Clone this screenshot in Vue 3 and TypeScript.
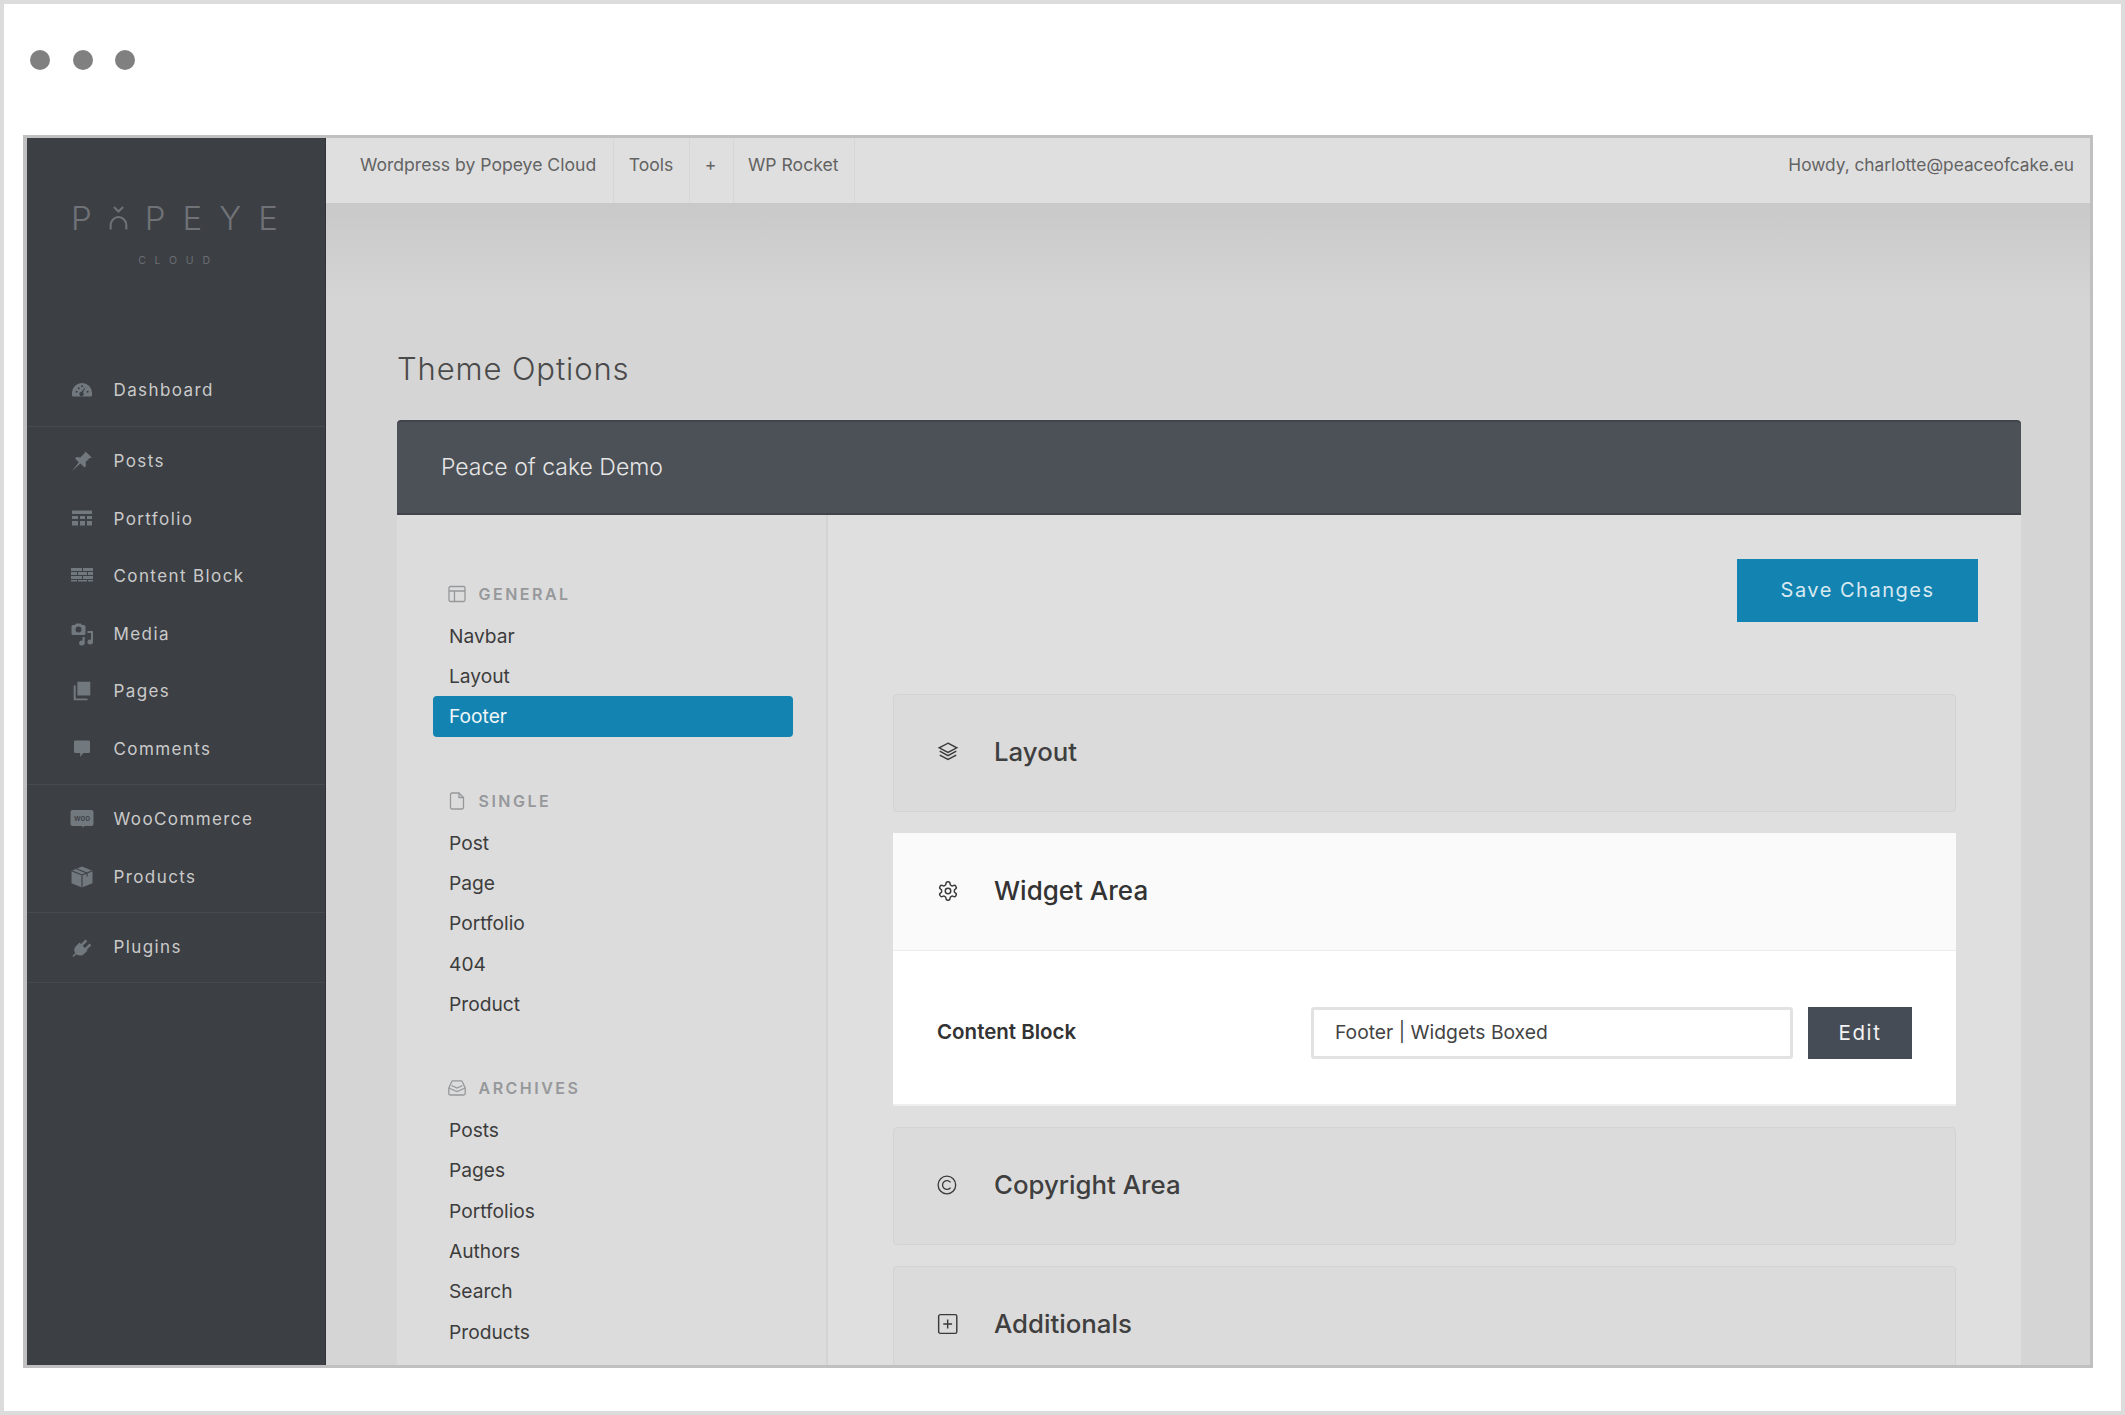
<script setup lang="ts">
interface NavIcon {
  d: string;
  cut?: string;
  woo?: boolean;
  box?: string;
}

interface NavItem {
  label: string;
  icon: NavIcon;
}

const icons: Record<string, NavIcon> = {
  gauge: {
    d: 'M12 4.500a11 11 0 0 0-11 11c0 1.400.2 2.500.6 3.500h20.800c.4-1 .6-2.100.6-3.500a11 11 0 0 0-11-11zM5 14a1.100 1.100 0 1 0 2.200 0a1.100 1.100 0 1 0-2.200 0zM7.400 10a1.100 1.100 0 1 0 2.200 0a1.100 1.100 0 1 0-2.200 0zM11 8a1.100 1.100 0 1 0 2.200 0a1.100 1.100 0 1 0-2.200 0zM17 14a1.100 1.100 0 1 0 2.200 0a1.100 1.100 0 1 0-2.200 0zM16 8.500l-3 6.300a2.200 2.200 0 1 1-1.800-.6z',
    box: '-1 -1 26 26',
  },
  pin: {
    d: 'M15.500 2.500l6.500 6.200-2.300.4-4 4 .2 3.800-1.400 1.500-4-4L2 22l6.800-8.700-3.700-3.800 1.500-1.400 3.700.3 4-4z',
  },
  table: {
    d: 'M2 3.500h20v3.500H2zM2 9h6v3H2zM10 9h5v3h-5zM17 9h5v3h-5zM2 14h6v4.500H2zM10 14h5v4.500h-5zM17 14h5v4.500h-5z',
  },
  bricks: {
    d: 'M1 4h11v3H1zM13 4h10v3H13zM1 8h6v3H1zM8 8h9v3H8zM18 8h5v3h-5zM1 12h11v3H1zM13 12h10v3H13zM1 16h6v1.500H1zM8 16h9v1.500H8zM18 16h5v1.500h-5z',
  },
  media: {
    d: 'M3 3h2l1-1.500h5L12 3h2a1.500 1.500 0 0 1 1.500 1.500v7A1.500 1.500 0 0 1 14 13H3a1.500 1.500 0 0 1-1.500-1.500v-7A1.500 1.500 0 0 1 3 3zM5.500 7.500a3 3 0 1 0 6 0a3 3 0 1 0-6 0zM17.500 9H23v11a2.800 2.400 0 1 1-2-2.300V11h-3.500zM12.500 15h2.200v6a2.800 2.400 0 1 1-2.200-2.300z',
  },
  pages: {
    d: 'M7 2h14v15H7zM3 6h2.200v14H18v2H3z',
    box: '-1 -1 26 26',
  },
  comment: {
    d: 'M4.500 3h15A1.500 1.500 0 0 1 21 4.500v11a1.500 1.500 0 0 1-1.500 1.500h-6L10 21.500V17H4.500A1.500 1.500 0 0 1 3 15.500v-11A1.500 1.500 0 0 1 4.500 3z',
    box: '-1.500 -1 27 27',
  },
  woo: {
    d: 'M2.500 3h19A2 2 0 0 1 23.500 5v12a2 2 0 0 1-2 2H14l-1 1.800L12 19H2.500a2 2 0 0 1-2-2V5a2 2 0 0 1 2-2z',
    woo: true,
  },
  box: {
    d: 'M12 1.500l10.500 4.200v12.500L12 22.500 1.500 18.200V5.700z',
    cut: 'M1.500 5.700L12 10l10.500-4.300M12 10v12.500M6.500 3.700l10.500 4.300v3.500',
  },
  plug: {
    d: 'M9.500 7.500l8 8L14 19a5.500 5.500 0 0 1-7.500.2L3.500 22l-1-1 2.800-3a5.500 5.500 0 0 1 .7-7zM11 9l4.500-4.500 1.800 1.800-4.500 4.500zM15 13l4.500-4.500 1.800 1.800-4.500 4.500z',
  },
};

const navGroups: NavItem[][] = [
  [{ label: 'Dashboard', icon: icons.gauge }],
  [
    { label: 'Posts', icon: icons.pin },
    { label: 'Portfolio', icon: icons.table },
    { label: 'Content Block', icon: icons.bricks },
    { label: 'Media', icon: icons.media },
    { label: 'Pages', icon: icons.pages },
    { label: 'Comments', icon: icons.comment },
  ],
  [
    { label: 'WooCommerce', icon: icons.woo },
    { label: 'Products', icon: icons.box },
  ],
  [{ label: 'Plugins', icon: icons.plug }],
];

const topLinks = ['Wordpress by Popeye Cloud', 'Tools', '+', 'WP Rocket'];

const sections = [
  { title: 'GENERAL', kind: 'layout', items: ['Navbar', 'Layout', 'Footer'] },
  { title: 'SINGLE', kind: 'page', items: ['Post', 'Page', 'Portfolio', '404', 'Product'] },
  { title: 'ARCHIVES', kind: 'inbox', items: ['Posts', 'Pages', 'Portfolios', 'Authors', 'Search', 'Products'] },
];
</script>

<template>
  <div class="frame">
    <div class="dots">
      <span class="dot"></span>
      <span class="dot"></span>
      <span class="dot"></span>
    </div>

    <div class="window">
      <aside class="sidebar">
        <div class="logo">
          <div class="logo-word">
            <span>P</span>
            <svg class="logo-o" viewBox="0 0 20 26" fill="none" stroke="currentColor" stroke-width="2.200">
              <path d="M1.500 25.500V21a8.500 9 0 0 1 17 0v4.500" />
              <path d="M5 1l5 5 5-5" />
            </svg>
            <span>P</span>
            <span>E</span>
            <span>Y</span>
            <span>E</span>
          </div>
          <div class="logo-sub">CLOUD</div>
        </div>

        <nav>
          <ul v-for="(group, g) in navGroups" :key="g" class="nav-group">
            <li v-for="item in group" :key="item.label" class="nav-item">
              <svg class="nav-icon" :viewBox="item.icon.box || '0 0 24 24'">
                <path :d="item.icon.d" fill="currentColor" fill-rule="evenodd" />
                <path v-if="item.icon.cut" :d="item.icon.cut" fill="none" stroke="#3c3f44" stroke-width="1.100" />
                <text v-if="item.icon.woo" x="12" y="14" class="woo-text" text-anchor="middle">woo</text>
              </svg>
              <span>{{ item.label }}</span>
            </li>
          </ul>
        </nav>
      </aside>

      <div class="main">
        <header class="topbar">
          <div class="top-links">
            <a v-for="link in topLinks" :key="link" class="top-link">{{ link }}</a>
          </div>
          <span class="howdy">Howdy, charlotte@peaceofcake.eu</span>
        </header>

        <div class="content">
          <h1 class="page-title">Theme Options</h1>

          <section class="panel">
            <div class="panel-head">Peace of cake Demo</div>
            <div class="panel-body">
              <div class="side-menu">
                <div v-for="section in sections" :key="section.title" class="menu-section">
                  <div class="menu-title">
                    <svg class="menu-icon" viewBox="0 0 18 18" fill="none" stroke="currentColor" stroke-width="1.300">
                      <template v-if="section.kind === 'layout'">
                        <rect x="1" y="1.500" width="16" height="15" rx="1.500" />
                        <path d="M1 6h16M6.500 6v10.500" />
                      </template>
                      <template v-else-if="section.kind === 'page'">
                        <path d="M2.500 2.500a1.500 1.500 0 0 1 1.500-1.500h7l4.500 4.500v10a1.500 1.500 0 0 1-1.500 1.500H4a1.500 1.500 0 0 1-1.500-1.500z" />
                        <path d="M11 1v4.500h4.500" />
                      </template>
                      <template v-else>
                        <path d="M.8 9l3-6.500a1 1 0 0 1 1-.6h8.400a1 1 0 0 1 1 .6l3 6.500v5.500a1.500 1.500 0 0 1-1.500 1.500H2.300a1.500 1.500 0 0 1-1.500-1.500z" />
                        <path d="M.8 9L9 12.500 17.200 9M3.500 6.500L9 9l5.500-2.500" />
                      </template>
                    </svg>
                    <span>{{ section.title }}</span>
                  </div>
                  <a
                    v-for="item in section.items"
                    :key="item"
                    class="menu-item"
                    :class="{ active: item === 'Footer' }"
                  >{{ item }}</a>
                </div>
              </div>

              <div class="options">
                <div class="save-row">
                  <button class="save-btn">Save Changes</button>
                </div>

                <div class="card">
                  <svg class="card-icon" viewBox="0 0 20 20" fill="none" stroke="currentColor" stroke-width="1.300">
                    <path d="M10 2l8 4.200-8 4.200-8-4.200z" />
                    <path d="M2.500 9.300L10 13.300l7.500-4M2.500 12.800l7.500 4 7.500-4" />
                  </svg>
                  <span class="card-title">Layout</span>
                </div>

                <div class="card-open">
                  <div class="card-open-head">
                    <svg class="card-icon" viewBox="0 0 24 24" fill="none" stroke="currentColor" stroke-width="1.600">
                      <path d="M12.220 2h-.44a2 2 0 0 0-2 2v.18a2 2 0 0 1-1 1.730l-.43.25a2 2 0 0 1-2 0l-.15-.08a2 2 0 0 0-2.730.73l-.22.38a2 2 0 0 0 .73 2.730l.15.1a2 2 0 0 1 1 1.720v.51a2 2 0 0 1-1 1.740l-.15.09a2 2 0 0 0-.73 2.730l.22.38a2 2 0 0 0 2.730.73l.15-.08a2 2 0 0 1 2 0l.43.25a2 2 0 0 1 1 1.730V20a2 2 0 0 0 2 2h.44a2 2 0 0 0 2-2v-.18a2 2 0 0 1 1-1.730l.43-.25a2 2 0 0 1 2 0l.15.08a2 2 0 0 0 2.730-.73l.22-.39a2 2 0 0 0-.73-2.730l-.15-.08a2 2 0 0 1-1-1.740v-.5a2 2 0 0 1 1-1.740l.15-.09a2 2 0 0 0 .73-2.730l-.22-.38a2 2 0 0 0-2.730-.73l-.15.08a2 2 0 0 1-2 0l-.43-.25a2 2 0 0 1-1-1.730V4a2 2 0 0 0-2-2z" />
                      <circle cx="12" cy="12" r="3" />
                    </svg>
                    <span class="card-title dark">Widget Area</span>
                  </div>
                  <div class="card-open-body">
                    <label class="field-label">Content Block</label>
                    <div class="field-input">Footer | Widgets Boxed</div>
                    <button class="edit-btn">Edit</button>
                  </div>
                </div>

                <div class="card">
                  <svg class="card-icon" viewBox="0 0 20 20" fill="none" stroke="currentColor" stroke-width="1.200">
                    <circle cx="9" cy="10" r="8" />
                    <path d="M12.300 7.700a4 4 0 1 0 0 4.600" />
                  </svg>
                  <span class="card-title">Copyright Area</span>
                </div>

                <div class="card">
                  <svg class="card-icon" viewBox="0 0 20 20" fill="none" stroke="currentColor" stroke-width="1.300">
                    <rect x="1.500" y="1.500" width="16.500" height="17" rx="1.500" />
                    <path d="M9.700 6v8M5.700 10h8" />
                  </svg>
                  <span class="card-title">Additionals</span>
                </div>
              </div>
            </div>
          </section>
        </div>
      </div>
    </div>
  </div>
</template>

<style>
html,
body {
  margin: 0;
  background: #fff;
}
</style>

<style scoped>
.frame {
  box-sizing: border-box;
  width: 2125px;
  height: 1415px;
  border: 4px solid #dcdcdc;
  background: #fff;
  font-family: Inter, "Liberation Sans", sans-serif;
  overflow: hidden;
}

.dots {
  display: flex;
  gap: 22.500px;
  height: 131px;
  padding: 46px 0 0 26px;
  box-sizing: border-box;
}

.dot {
  width: 20px;
  height: 20px;
  border-radius: 50%;
  background: #808080;
}

.window {
  display: flex;
  box-sizing: border-box;
  width: 2070px;
  height: 1233px;
  margin-left: 19px;
  border: 3px solid #c0c0c0;
  border-left-width: 4px;
  overflow: hidden;
}

.sidebar {
  width: 299px;
  flex-shrink: 0;
  background: #3c3f44;
  border-right: 1px solid #2f3236;
  box-sizing: border-box;
}

.logo {
  height: 223px;
  padding: 62px 0 0 44px;
  box-sizing: border-box;
}

.logo-word {
  display: flex;
  justify-content: space-between;
  align-items: center;
  width: 207px;
  height: 36px;
  font-size: 33px;
  font-weight: 300;
  line-height: 36px;
  color: #6f7377;
}

.logo-o {
  width: 19px;
  height: 24px;
}

.logo-sub {
  width: 207px;
  margin-top: 19px;
  padding-left: 8px;
  box-sizing: border-box;
  font-size: 10.500px;
  line-height: 12px;
  letter-spacing: 8.800px;
  text-align: center;
  color: #6a6e72;
}

.nav-group {
  list-style: none;
  margin: 0;
  padding: 6px 0;
  border-bottom: 1px solid #46494e;
}

.nav-group:first-child {
  padding: 0 0 7px;
}

.nav-item {
  display: flex;
  align-items: center;
  height: 57.500px;
  padding-left: 43px;
  font-size: 17px;
  letter-spacing: 1.400px;
  color: #cacaca;
}

.nav-icon {
  width: 24px;
  height: 24px;
  margin-right: 19.500px;
  flex-shrink: 0;
  color: #71787e;
}

.woo-text {
  font-size: 8px;
  font-weight: 500;
  letter-spacing: 0;
  fill: #3c3f44;
}

.main {
  flex: 1;
  min-width: 0;
  display: flex;
  flex-direction: column;
  background: #d5d5d5;
}

.topbar {
  display: flex;
  justify-content: space-between;
  align-items: flex-start;
  height: 65px;
  flex-shrink: 0;
  padding-right: 16px;
  box-sizing: border-box;
  background: #dfdfdf;
  font-size: 17.300px;
  color: #636363;
  line-height: 53px;
}

.top-links {
  display: flex;
  font-size: 17.600px;
}

.top-link {
  height: 65px;
  padding: 0 16px 0 14.500px;
  border-right: 1px solid #d7d7d7;
}

.top-link:first-child {
  padding: 0 17px 0 34px;
}

.content {
  flex: 1;
  padding: 149px 69px 0 71px;
  background: linear-gradient(#c9c9c9, #d5d5d5 100px);
}

.page-title {
  margin: 0 0 34px;
  font-size: 31px;
  font-weight: 300;
  letter-spacing: 0.880px;
  line-height: 34px;
  color: #4a4a4a;
}

.panel-head {
  display: flex;
  align-items: center;
  height: 95px;
  padding: 0 0 2px 44px;
  box-sizing: border-box;
  border-top: 2px solid #41454b;
  border-bottom: 2px solid #41454b;
  border-radius: 4px 4px 0 0;
  background: #4c5057;
  font-size: 23px;
  font-weight: 300;
  color: #e6e6e6;
}

.panel-body {
  display: flex;
}

.side-menu {
  width: 431px;
  flex-shrink: 0;
  box-sizing: border-box;
  padding: 67px 33px 0 35.500px;
  border-right: 2px solid #d3d3d3;
  background: #dcdcdc;
}

.menu-section {
  margin-bottom: 52px;
}

.menu-title {
  display: flex;
  align-items: center;
  height: 24px;
  margin-bottom: 9.800px;
  padding-left: 15px;
  font-size: 16px;
  font-weight: 600;
  letter-spacing: 2.500px;
  color: #96989b;
}

.menu-icon {
  width: 18px;
  height: 18px;
  margin-right: 13px;
}

.menu-item {
  display: block;
  height: 40.330px;
  padding-left: 16.500px;
  border-radius: 4px;
  font-size: 19.200px;
  line-height: 40px;
  color: #3c3c3c;
}

.menu-item.active {
  background: #1384b1;
  color: #f0f6f9;
}

.options {
  flex: 1;
  min-width: 0;
  padding: 44px 43px 0 65px;
  background: #dfdfdf;
}

.save-row {
  display: flex;
  justify-content: flex-end;
  margin-bottom: 72px;
}

.save-btn {
  width: 241px;
  height: 63px;
  padding-bottom: 2px;
  border: 0;
  background: #1384b1;
  font-family: inherit;
  font-size: 20px;
  letter-spacing: 1.500px;
  color: #d8e9f1;
}

.card {
  display: flex;
  align-items: center;
  width: 1063px;
  height: 118px;
  margin-bottom: 21px;
  box-sizing: border-box;
  padding: 0 0 3px 43px;
  border: 1px solid #d3d3d3;
  border-radius: 4px;
  background: #dbdbdb;
}

.card-icon {
  width: 22px;
  height: 22px;
  margin-right: 35px;
  flex-shrink: 0;
  color: #3a3a3a;
}

.card-title {
  font-size: 25.800px;
  font-weight: 500;
  color: #3f3f3f;
}

.card-title.dark {
  font-size: 26px;
  color: #333;
}

.card-open {
  width: 1063px;
  margin-bottom: 21px;
  box-sizing: border-box;
  border-bottom: 2px solid #efefef;
  background: #fff;
}

.card-open-head {
  display: flex;
  align-items: center;
  box-sizing: border-box;
  height: 118px;
  padding: 0 0 2px 44px;
  border-bottom: 1px solid #ebebeb;
  background: #fafafa;
}

.card-open-body {
  display: flex;
  align-items: center;
  padding: 56px 44px 45px;
}

.field-label {
  width: 374px;
  flex-shrink: 0;
  margin-top: -4px;
  font-size: 20.500px;
  font-weight: 600;
  color: #333;
}

.field-input {
  box-sizing: border-box;
  width: 482px;
  height: 52px;
  padding-left: 21px;
  border: 3px solid #e2e2e2;
  border-radius: 3px;
  font-size: 19.300px;
  line-height: 45px;
  color: #444;
}

.edit-btn {
  width: 104px;
  height: 52px;
  margin-left: 15px;
  padding-bottom: 2px;
  border: 0;
  background: #464c55;
  font-family: inherit;
  font-size: 20.500px;
  letter-spacing: 1.600px;
  color: #f2f2f2;
}
</style>
